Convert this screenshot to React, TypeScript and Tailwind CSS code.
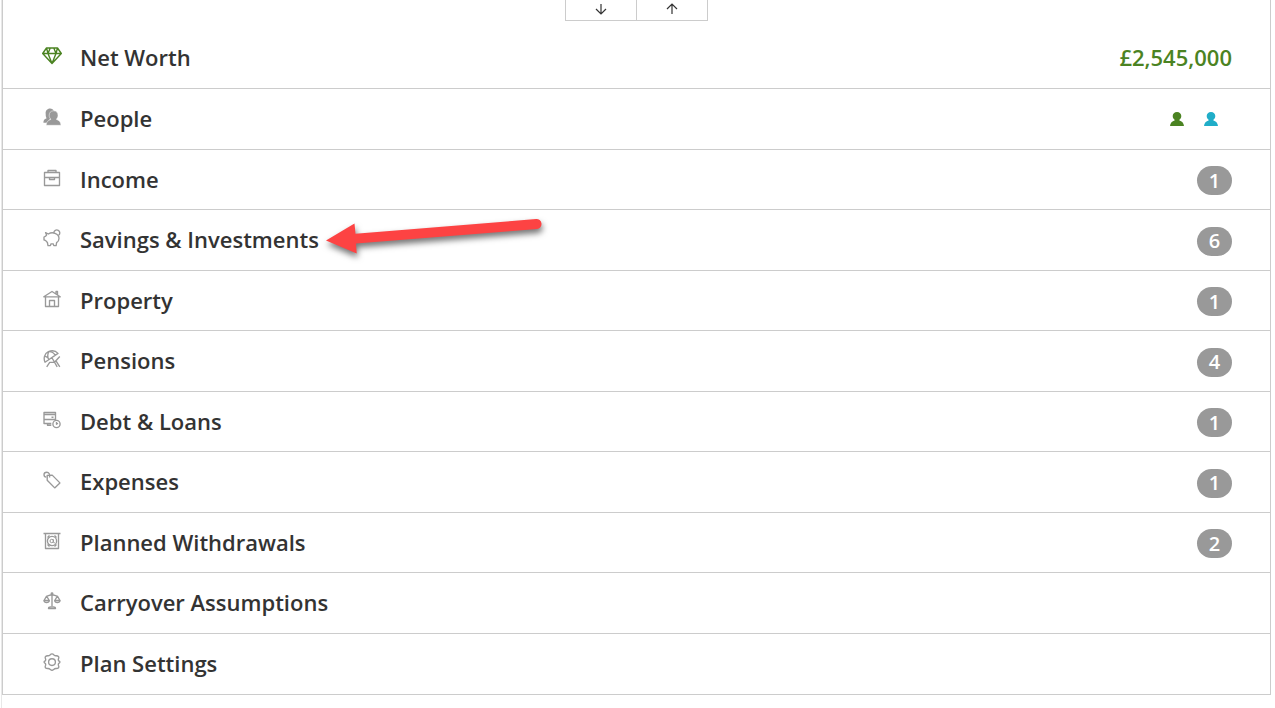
import { ReactNode } from "react";
import clsx from "clsx";

type IconProps = { className?: string; children: ReactNode };

const LineIcon = ({ className = "size-[18px] text-[#999]", children }: IconProps) => (
  <svg
    viewBox="0 0 18 18"
    className={className}
    fill="none"
    stroke="currentColor"
    strokeWidth="1.35"
    strokeLinejoin="round"
    aria-hidden="true"
  >
    {children}
  </svg>
);

const DiamondIcon = () => (
  <svg
    viewBox="0 0 20 18"
    className="w-5 h-[18px] text-[#4b8322]"
    fill="none"
    stroke="currentColor"
    strokeWidth="1.4"
    strokeLinejoin="round"
    aria-hidden="true"
  >
    <path d="M4.5 1h11L19.3 6.5 10 16.4.7 6.500zM.7 6.500h18.600M8.200 1 6 6.500l4 9.900 4-9.900L11.800 1M4.500 1 6 6.500M15.500 1 14 6.500" />
  </svg>
);

const PeopleIcon = () => (
  <LineIcon>
    <path
      d="M7 .6c2 0 3.400 1 3.800 2.500L7.400 5.400l.5 4.200-3.400 5.200H.4c0-2.600 1-3.700 3.200-4.500C2.800 9 2.700 7.600 2.700 6 2.200 3 4.300.6 7 .6z"
      fill="currentColor"
      stroke="none"
    />
    <path
      d="M10.600 2.800c2.900 0 4.500 2 4.400 4.500 0 1.700-.6 2.900-1.500 3.700v.5c2.200.8 4.300 2 4.500 5.800H3.200c.2-3.800 2.300-5 4.500-5.800V11c-.9-.8-1.500-2-1.500-3.700-.1-2.500 1.500-4.500 4.400-4.500z"
      fill="currentColor"
      stroke="#fff"
      strokeWidth=".5"
    />
  </LineIcon>
);

const BriefcaseIcon = () => (
  <LineIcon>
    <path d="M1.500 3.500h15v13h-15zM5 3.500v-2h8v2M1.500 8.500h15M6.500 8.500v2h5v-2" />
  </LineIcon>
);

const PiggyIcon = () => (
  <LineIcon>
    <path d="M2.600 3.700 5.400 5c1.500-1 4.300-1.500 6.600-.7 2.400.8 4 2.800 4 5.100 0 1.700-.9 3.200-2.400 4.200l-.5 3h-2.300l-.6-1.800H8l-.6 1.800H5l-.6-3.100-1.700-1.900-1.700-.7V8l1.700-.8.9-1.200z" />
    <path d="M10.800 3.900a3 3 0 1 1 4.600 2.600" />
  </LineIcon>
);

const HouseIcon = () => (
  <LineIcon>
    <path d="M.8 6.800 9 1.500l8.200 5.300zM2.500 6.800v9.700h13V6.800M6.500 16.500v-6h5v6M13 4V1.500h1.500v3.300" />
  </LineIcon>
);

const ParasolIcon = () => (
  <LineIcon>
    <path d="M2 12.200C.2 8.200 1.500 3.500 5.400 1.700 8.700.3 12.700.9 15 3.400zM5.600 9.800c-1.200-3.300-.8-6.600.3-8.200 2.500-.2 4.700 1 6.200 3.600M1.800 6.200 5 7.600M8.800 7.500l5.400 9.300M3.700 16.800l3-4.500h4.800l5.300-5.800M13 10.800l3.800 6" />
  </LineIcon>
);

const DebtIcon = () => (
  <LineIcon>
    <path d="M1 1.500h11.500v7H1zM1 3.500h11.500M1 8.500v4h7.300M8.500 6.200h2M12.500 8.500v.5M4.500 12.500v1.700h3.800" />
    <circle cx="13.500" cy="13" r="3.600" />
    <path d="M13.500 11v2.200l1.500-1" />
  </LineIcon>
);

const TagIcon = () => (
  <LineIcon>
    <path d="m4.200 4.300 5-.2 7.700 7.800-5.200 5-7.500-7.700z" />
    <path d="M6.500 6.500C7.200 3.600 6 1.200 3.800 1.200c-1.700 0-2.800 1.100-2.800 2.500 0 1.300 1 2.300 2.300 2.500" />
  </LineIcon>
);

const SafeIcon = () => (
  <LineIcon>
    <path d="M.5 1.500h17M2.500 1.500v15h13v-15M4.500 5.500l2-2M13.500 5.500l-2-2M4.500 12.500l2 2M13.500 12.500l-2 2" />
    <circle cx="9" cy="9" r="4.600" />
    <path d="M12 10.500c-1 .8-1.700.3-1.600-.8V7.300M10.400 9a1.700 1.700 0 1 1-3.400 0 1.700 1.700 0 0 1 3.400 0z" strokeWidth="1" />
  </LineIcon>
);

const ScalesIcon = () => (
  <LineIcon>
    <path d="M9 2.300v12M3.500 4.200c2.500 0 3-1.500 5.500-1.500s3 1.500 5.500 1.500M1 8.500l2.600-4.300 2.700 4.300zM11.700 8.500l2.700-4.300L17 8.500z" />
    <path d="M1 8.500c.3 2.700 5 2.700 5.300 0M11.700 8.500c.3 2.700 5 2.700 5.300 0M5.500 16.500c0-1.200 1-1.700 2.200-1.700h2.600c1.200 0 2.200.5 2.200 1.700z" />
    <circle cx="9" cy="1.800" r=".8" />
  </LineIcon>
);

const GearIcon = () => (
  <LineIcon>
    <path d="M7 2Q9-.2 11 2 12 2.900 13.300 2.700c2.200 0 3 1.300 2.200 3-.4 1-.3 1.600.4 2.300 1.400.5 1.400 1.700 0 2.300-.7.700-.8 1.300-.4 2.300.8 1.800 0 2.900-2.200 2.900-1.300-.1-1.800.1-2.300.8q-2 2-4 0c-.5-.7-1-.9-2.300-.8-2.200 0-3-1.100-2.200-2.900.4-1 .3-1.600-.4-2.300-1.400-.6-1.400-1.800 0-2.300.7-.7.800-1.300.4-2.300-.8-1.700 0-3 2.200-3Q6 2.900 7 2z" />
    <circle cx="9" cy="9.100" r="3.400" />
  </LineIcon>
);

const PersonIcon = ({ className }: { className: string }) => (
  <svg viewBox="0 0 14 14" className={clsx("size-3.5", className)} fill="currentColor" aria-hidden="true">
    <path d="M7 0c2.600 0 4.300 1.700 4.300 4 0 1.700-.8 2.900-1.900 3.700v.7C11.800 9 13.800 10.800 14 14H0c.2-3.200 2.200-5 4.600-5.600v-.7C3.500 6.900 2.700 5.700 2.700 4c0-2.300 1.700-4 4.300-4z" />
  </svg>
);

const ArrowIcon = ({ className }: { className?: string }) => (
  <svg viewBox="0 0 12 12" className={clsx("size-3", className)} fill="none" stroke="#333" strokeWidth="1.2" aria-hidden="true">
    <path d="M6 11V.8M1 6 6 1l5 5" />
  </svg>
);

const Pointer = () => (
  <svg
    viewBox="0 -1 230 48"
    className="absolute left-full top-1/2 -translate-y-1/2 ml-px w-[230px] h-12 pointer-events-none drop-shadow-[1px_4px_3px_rgba(0,0,0,0.55)]"
    aria-hidden="true"
  >
    <path d="M6 24.500 34.500 7.500l1 10.200L216 3a5 5 0 0 1 1 10L36 27.500l.7 10z" fill="#fd4343" />
  </svg>
);

const Badge = ({ count }: { count: number }) => (
  <span className="flex items-center justify-center w-[35px] h-[29px] mt-0.5 rounded-full bg-[#999] text-white text-xl font-semibold">
    {count}
  </span>
);

type Section = { label: string; icon: ReactNode; right?: ReactNode; highlighted?: boolean };

const sections: Section[] = [
  {
    label: "Net Worth",
    icon: <DiamondIcon />,
    right: <span className="block mb-0.5 text-[#4b8322]">£2,545,000</span>,
  },
  {
    label: "People",
    icon: <PeopleIcon />,
    right: (
      <span className="flex gap-5 pr-3.5">
        <PersonIcon className="text-[#4b8322]" />
        <PersonIcon className="text-[#20adc8]" />
      </span>
    ),
  },
  { label: "Income", icon: <BriefcaseIcon />, right: <Badge count={1} /> },
  { label: "Savings & Investments", icon: <PiggyIcon />, right: <Badge count={6} />, highlighted: true },
  { label: "Property", icon: <HouseIcon />, right: <Badge count={1} /> },
  { label: "Pensions", icon: <ParasolIcon />, right: <Badge count={4} /> },
  { label: "Debt & Loans", icon: <DebtIcon />, right: <Badge count={1} /> },
  { label: "Expenses", icon: <TagIcon />, right: <Badge count={1} /> },
  { label: "Planned Withdrawals", icon: <SafeIcon />, right: <Badge count={2} /> },
  { label: "Carryover Assumptions", icon: <ScalesIcon /> },
  { label: "Plan Settings", icon: <GearIcon /> },
];

export default function App() {
  return (
    <main className="min-h-screen ml-px border-l border-[#e8e8e8] bg-white pr-1 font-['Open_Sans',sans-serif] text-[#333]">
      <div className="border-x border-[#ccc]">
        <div className="flex justify-center mb-[7px]">
          <div className="flex h-[21px] border-x border-b border-[#ccc] divide-x divide-[#ccc]">
            <button type="button" aria-label="Move down" className="flex w-[71px] items-center justify-center pb-0.5">
              <ArrowIcon className="rotate-180" />
            </button>
            <button type="button" aria-label="Move up" className="flex w-[70px] items-center justify-center pb-0.5">
              <ArrowIcon />
            </button>
          </div>
        </div>
        <ul>
          {sections.map(({ label, icon, right, highlighted }, index) => (
            <li
              key={label}
              className={clsx(
                "border-b border-[#ccc]",
                index % 2 === 1 || index === 0 || index === sections.length - 1 ? "h-[61px]" : "h-[60px]"
              )}
            >
              <button
                type="button"
                className="flex w-full h-full items-center pl-[39px] pr-[38px] text-[22px] leading-8 font-semibold text-left"
              >
                <span className="flex w-5 justify-center mr-[18px] mb-1">{icon}</span>
                <span className="relative mb-0.5">
                  {label}
                  {highlighted && <Pointer />}
                </span>
                <span className="ml-auto">{right}</span>
              </button>
            </li>
          ))}
        </ul>
      </div>
    </main>
  );
}
